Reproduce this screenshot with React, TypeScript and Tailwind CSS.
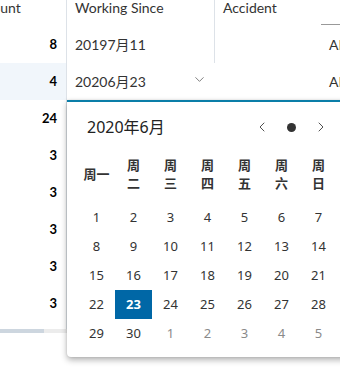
import { ChevronDown, ChevronLeft, ChevronRight } from "lucide-react";

const counts = [8, 4, 24, 3, 3, 3, 3, 3];
const weekdays = ["一", "二", "三", "四", "五", "六", "日"];

const days: { d: number; other?: boolean }[] = [
  ...Array.from({ length: 30 }, (_, i) => ({ d: i + 1 })),
  ...[1, 2, 3, 4, 5].map((d) => ({ d, other: true })),
];

const gridFont = { fontFamily: 'Lato, "Noto Sans CJK SC", sans-serif' };

const App = () => {
  return (
    <div
      className="relative w-[340px] h-[388px] overflow-hidden bg-white text-[#333]"
      style={{ fontFamily: '"Noto Sans", "Noto Sans CJK SC", sans-serif' }}
    >
      {/* Grid */}
      <div className="flex -ml-[25px] w-[400px]" style={gridFont}>
        {/* Count column */}
        <div className="w-[92px] shrink-0 border-r border-[#dde2e8] pb-[8px]">
          <div className="h-[26px] px-2 text-[14px] leading-[16px]">Count</div>
          {counts.map((c, i) => (
            <div
              key={i}
              className={`h-[37px] flex items-center justify-end pr-[9px] text-[13px] font-bold text-black ${
                i === 1 ? "bg-[#f1f6fb]" : ""
              }`}
            >
              {c}
            </div>
          ))}
        </div>

        {/* Working Since column */}
        <div className="w-[148px] shrink-0">
          <div className="h-[26px] px-2 text-[14px] leading-[16px] border-r border-[#dde2e8]">
            Working Since
          </div>
          <div className="h-[37px] flex items-center pl-2 text-[14px] border-r border-[#dde2e8]">
            20197月11
          </div>
          <div className="h-[37px] flex items-center justify-between pl-2 pr-[8px] text-[14px]">
            <span>20206月23</span>
            <ChevronDown size={15} strokeWidth={1.2} className="text-[#555] -mt-[4px]" />
          </div>
        </div>

        {/* Accident column */}
        <div className="flex-1">
          <div className="h-[26px] px-2 text-[14px] leading-[16px] relative">
            Accident
            <div className="absolute left-[106px] right-0 top-[24px] h-[1px] bg-[#999]" />
          </div>
          <div className="h-[37px] flex items-center pl-[114px] text-[14px]">AD</div>
          <div className="h-[37px] flex items-center pl-[114px] text-[14px]">AD</div>
        </div>
      </div>

      {/* Horizontal scrollbar */}
      <div className="absolute left-0 top-[329px] w-[67px] h-[4px] flex">
        <div className="w-[44px] bg-[#cdd6df]" />
        <div className="flex-1 bg-[#ececec]" />
      </div>

      {/* Date picker popup */}
      <div className="absolute left-[67px] top-[100px] w-[290px] h-[257px] bg-white border-t-2 border-[#0a7ea8] rounded-b-[4px] shadow-[0_3px_6px_rgba(0,0,0,0.3),0_0_2px_rgba(0,0,0,0.15)]">
        <div className="flex items-center justify-between h-[50px] pl-[20px] pr-[28px]">
          <span className="text-[16px] text-[#222] whitespace-nowrap">2020年6月</span>
          <div className="flex items-center gap-[17px]">
            <ChevronLeft size={16} strokeWidth={1.4} className="text-[#444]" />
            <span className="w-[9px] h-[9px] rounded-full bg-[#333]" />
            <ChevronRight size={16} strokeWidth={1.4} className="text-[#444]" />
          </div>
        </div>

        <div className="pl-[11px]">
          <div className="grid grid-cols-[repeat(7,37px)] h-[43px] items-center">
            {weekdays.map((w, i) => (
              <div
                key={w}
                className="text-center text-[13px] font-semibold leading-[18px] text-[#333]"
              >
                {i === 0 ? (
                  "周一"
                ) : (
                  <>
                    周<br />
                    {w}
                  </>
                )}
              </div>
            ))}
          </div>

          <div className="grid grid-cols-[repeat(7,37px)] auto-rows-[29px] mt-[8px]">
            {days.map((day, i) => (
              <div
                key={i}
                className={`flex items-center justify-center text-[13px] ${
                  day.d === 23 && !day.other
                    ? "bg-[#0067a6] text-white font-bold"
                    : day.other
                    ? "text-[#8a8a8a]"
                    : "text-[#333]"
                }`}
              >
                {day.d}
              </div>
            ))}
          </div>
        </div>
      </div>
    </div>
  );
};

export default App;
